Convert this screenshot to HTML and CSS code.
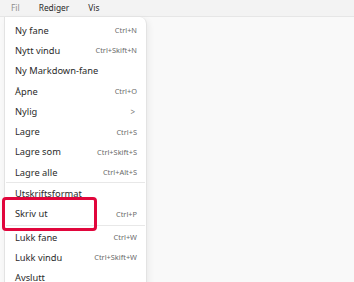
FILE: index.html
```html
<!DOCTYPE html>
<html lang="nb">
<head>
<meta charset="utf-8">
<link rel="stylesheet" href="styles.css">
</head>
<body>
<div class="menubar">
  <span class="top active">Fil</span>
  <span class="top">Rediger</span>
  <span class="top">Vis</span>
</div>
<div class="content">
  <div class="menu">
    <div class="item"><span>Ny fane</span><span class="key">Ctrl+N</span></div>
    <div class="item"><span>Nytt vindu</span><span class="key">Ctrl+Skift+N</span></div>
    <div class="item"><span>Ny Markdown-fane</span></div>
    <div class="item"><span>Åpne</span><span class="key">Ctrl+O</span></div>
    <div class="item"><span>Nylig</span><span class="chev">&gt;</span></div>
    <div class="item"><span>Lagre</span><span class="key">Ctrl+S</span></div>
    <div class="item"><span>Lagre som</span><span class="key">Ctrl+Skift+S</span></div>
    <div class="item"><span>Lagre alle</span><span class="key">Ctrl+Alt+S</span></div>
    <div class="sep"></div>
    <div class="item"><span>Utskriftsformat</span></div>
    <div class="item"><span>Skriv ut</span><span class="key">Ctrl+P</span></div>
    <div class="sep sep2"></div>
    <div class="item"><span>Lukk fane</span><span class="key">Ctrl+W</span></div>
    <div class="item"><span>Lukk vindu</span><span class="key">Ctrl+Skift+W</span></div>
    <div class="item"><span>Avslutt</span></div>
  </div>
  <div class="highlight"></div>
</div>
</body>
</html>
```
FILE: styles.css
```css
html, body {
  margin: 0;
  padding: 0;
  height: 100%;
  overflow: hidden;
}
body {
  background: #f9f9f9;
  font-family: "Noto Sans", "Open Sans", sans-serif;
  color: #2a2a2a;
}
.menubar {
  height: 16px;
  background: #f3f3f3;
  border-bottom: 1px solid #e6e6e6;
  display: flex;
  align-items: center;
  padding-left: 11px;
  gap: 19px;
  font-size: 8.4px;
}
.top {
  color: #2a2a2a;
  line-height: 14px;
}
.top.active {
  color: #8e8e8e;
}
.content {
  position: relative;
}
.menu {
  margin-left: 4px;
  width: 141px;
  background: #fff;
  border: 1px solid #e3e3e3;
  border-top: none;
  border-radius: 0 7px 7px 7px;
  padding: 3px 0 6px;
  box-shadow: 2px 2px 6px rgba(0,0,0,0.06);
}
.item {
  height: 20.3px;
  display: flex;
  align-items: center;
  justify-content: space-between;
  padding: 0 9px 0 10px;
  font-size: 9.3px;
  color: #2a2a2a;
}
.key {
  font-size: 7.4px;
  color: #6a6a6a;
}
.chev {
  font-size: 8px;
  color: #777;
  padding-right: 2px;
}
.sep {
  height: 1px;
  background: #e8e8e8;
  margin: 0 1px;
}
.sep2 {
  margin: 1px 1px;
}
.highlight {
  position: absolute;
  left: 2px;
  top: 180px;
  width: 89px;
  height: 28px;
  border: 3px solid #e1063c;
  border-radius: 4px;
}
```
